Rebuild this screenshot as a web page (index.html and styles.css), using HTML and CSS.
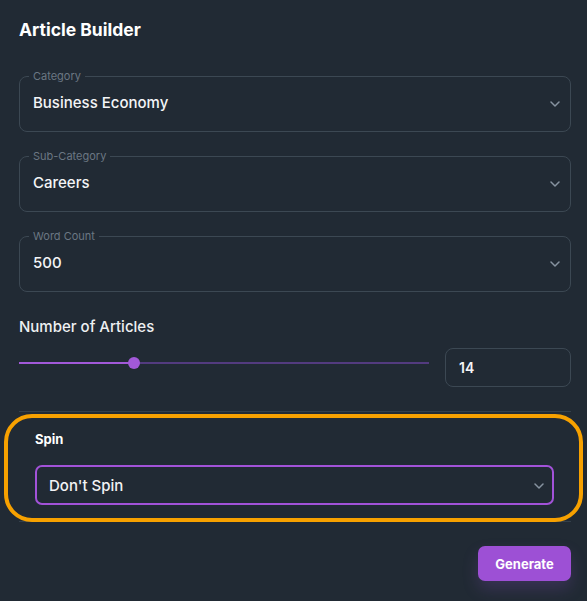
FILE: index.html
```html
<!DOCTYPE html>
<html lang="en">
<head>
<meta charset="utf-8">
<title>Article Builder</title>
<link rel="stylesheet" href="styles.css">
</head>
<body>
<main class="panel">
  <h1 class="title">Article Builder</h1>

  <fieldset class="field">
    <legend class="field-label">Category</legend>
    <div class="field-value">
      <span>Business Economy</span>
      <svg class="chev" width="10" height="6" viewBox="0 0 10 6"><path d="M1 1l4 4 4-4" fill="none" stroke="#8793a0" stroke-width="1.5" stroke-linecap="round" stroke-linejoin="round"/></svg>
    </div>
  </fieldset>

  <fieldset class="field">
    <legend class="field-label">Sub-Category</legend>
    <div class="field-value">
      <span>Careers</span>
      <svg class="chev" width="10" height="6" viewBox="0 0 10 6"><path d="M1 1l4 4 4-4" fill="none" stroke="#8793a0" stroke-width="1.5" stroke-linecap="round" stroke-linejoin="round"/></svg>
    </div>
  </fieldset>

  <fieldset class="field">
    <legend class="field-label">Word Count</legend>
    <div class="field-value">
      <span>500</span>
      <svg class="chev" width="10" height="6" viewBox="0 0 10 6"><path d="M1 1l4 4 4-4" fill="none" stroke="#8793a0" stroke-width="1.5" stroke-linecap="round" stroke-linejoin="round"/></svg>
    </div>
  </fieldset>

  <section class="articles">
    <div class="articles-label">Number of Articles</div>
    <div class="articles-row">
      <div class="slider">
        <div class="track">
          <div class="track-fill" style="width:115px"></div>
          <div class="thumb" style="left:115px"></div>
        </div>
      </div>
      <div class="num-input">14</div>
    </div>
  </section>

  <section class="spin">
    <div class="spin-highlight"></div>
    <div class="spin-label">Spin</div>
    <div class="spin-select">
      <span>Don't Spin</span>
      <svg class="chev" width="10" height="6" viewBox="0 0 10 6"><path d="M1 1l4 4 4-4" fill="none" stroke="#8793a0" stroke-width="1.5" stroke-linecap="round" stroke-linejoin="round"/></svg>
    </div>
  </section>

  <div class="actions">
    <button class="btn-generate" type="button">Generate</button>
  </div>
</main>
</body>
</html>
```

FILE: styles.css
```css
* { box-sizing: border-box; }

html, body {
  margin: 0;
  padding: 0;
  background: #212a34;
  height: 100%;
}

body {
  font-family: "Inter", "Open Sans", sans-serif;
  color: #f2f3f5;
  overflow: hidden;
}

.panel {
  width: 587px;
  padding: 19px 16px 0 19px;
  display: flex;
  flex-direction: column;
}

.title {
  margin: 0;
  font-size: 17.5px;
  line-height: 22px;
  font-weight: 700;
  color: #ffffff;
}

.field {
  margin: 0;
  padding: 0 9px 0 9px;
  min-width: 0;
  border: 1px solid #3c4853;
  border-radius: 8px;
  width: 552px;
}

.title + .field { margin-top: 29px; }
.field + .field { margin-top: 18px; }

.field-label {
  padding: 0 4px;
  font-size: 11px;
  line-height: 13px;
  color: #6b7783;
  font-weight: 400;
}

.field-value {
  display: flex;
  align-items: center;
  justify-content: space-between;
  height: 48px;
  padding: 0 1px 8px 4px;
  font-size: 15px;
  font-weight: 500;
  line-height: 20px;
  color: #f4f5f7;
}

.chev { display: block; margin-top: 2px; }

.articles {
  margin-top: 25px;
}

.articles-label {
  font-size: 15px;
  line-height: 20px;
  font-weight: 500;
  color: #eef0f2;
}

.articles-row {
  margin-top: 11px;
  display: flex;
  gap: 16px;
  align-items: flex-start;
}

.slider {
  width: 410px;
  height: 30px;
  display: flex;
  align-items: center;
}

.track {
  position: relative;
  width: 100%;
  height: 2px;
  background: #533b7f;
}

.track-fill {
  height: 2px;
  background: #a259d9;
}

.thumb {
  position: absolute;
  top: -5px;
  width: 12px;
  height: 12px;
  margin-left: -6px;
  border-radius: 50%;
  background: #a259d9;
}

.num-input {
  width: 126px;
  height: 39px;
  border: 1px solid #3c4853;
  border-radius: 8px;
  padding: 0 13px;
  display: flex;
  align-items: center;
  font-size: 14px;
  font-weight: 600;
  color: #f4f5f7;
}

.spin {
  position: relative;
  margin-top: 24px;
  border-top: 1px solid #34404b;
  border-bottom: 1px solid #34404b;
  padding: 19px 17px 16px 16px;
}

.spin-highlight {
  position: absolute;
  top: 2px;
  bottom: -1px;
  left: -15px;
  right: -12px;
  border: 4px solid #f7a100;
  border-radius: 28px;
  pointer-events: none;
}

.spin-label {
  font-size: 13px;
  line-height: 16px;
  font-weight: 700;
  color: #ffffff;
}

.spin-select {
  margin-top: 18px;
  height: 40px;
  border: 2px solid #a252d8;
  border-radius: 7px;
  display: flex;
  align-items: center;
  justify-content: space-between;
  padding: 0 8px 0 12px;
  font-size: 15px;
  font-weight: 500;
  color: #f2f3f5;
}

.actions {
  margin-top: 24px;
  display: flex;
  justify-content: flex-end;
}

.btn-generate {
  width: 93px;
  height: 35px;
  border: 0;
  border-radius: 7px;
  background: #9d50d5;
  color: #ffffff;
  font-family: inherit;
  font-size: 13px;
  font-weight: 700;
  padding-top: 1px;
  box-shadow: 0 8px 16px rgba(140, 80, 200, 0.22);
  cursor: pointer;
}
```
